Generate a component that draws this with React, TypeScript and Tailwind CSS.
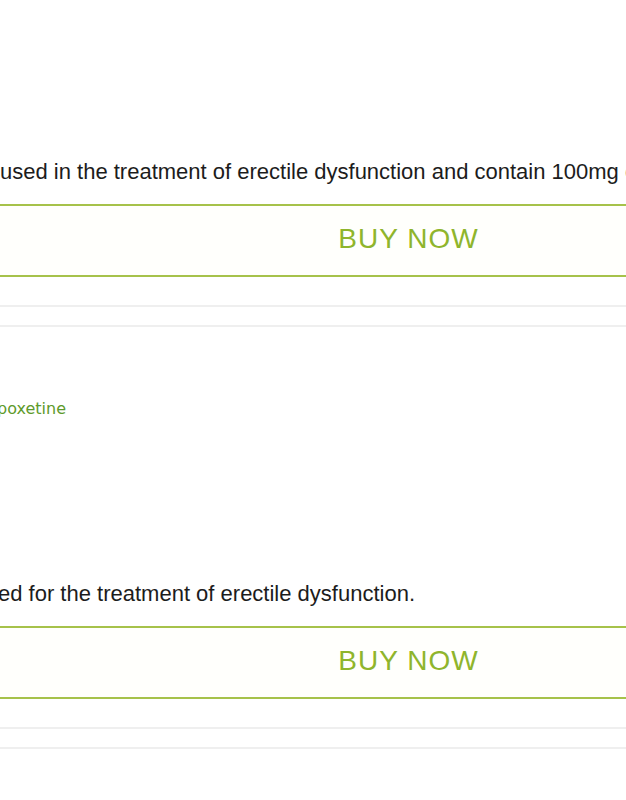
type ProductProps = {
  description: string;
  shift?: string;
};

// One product row: the tail of its description, the outlined buy button and the divider lines.
function ProductRow({ description, shift = '' }: ProductProps) {
  return (
    <section>
      <p
        className={`h-[26px] whitespace-nowrap text-[22px] leading-[26px] text-[#1c1c1c] ${shift}`}
      >
        {description}
      </p>
      <a
        href="#"
        className="mt-[19px] flex h-[73px] items-center justify-center border-y-2 border-[#a6c24a] bg-[#fffffc] pb-[4px] pl-[191px] text-[28px] leading-none tracking-[1px] text-[#8fb52c]"
      >
        BUY NOW
      </a>
      <div className="mt-[28px] h-[2px] bg-[#efefef]" />
      <div className="mt-[18px] h-[2px] bg-[#efefef]" />
    </section>
  );
}

export default function App() {
  return (
    <div
      className="h-[800px] w-[626px] overflow-hidden bg-white pt-[159px]"
      style={{ fontFamily: '"Liberation Sans", Arial, sans-serif' }}
    >
      <ProductRow description="used in the treatment of erectile dysfunction and contain 100mg of" />
      <p
        className="mt-[72px] -ml-[3px] h-[19px] whitespace-nowrap text-[16px] leading-[19px] text-[#5e9a2c]"
        style={{ fontFamily: '"DejaVu Sans", Verdana, sans-serif' }}
      >
        poxetine
      </p>
      <div className="mt-[163px]">
        <ProductRow
          description="ed for the treatment of erectile dysfunction."
          shift="-ml-[2px]"
        />
      </div>
    </div>
  );
}
